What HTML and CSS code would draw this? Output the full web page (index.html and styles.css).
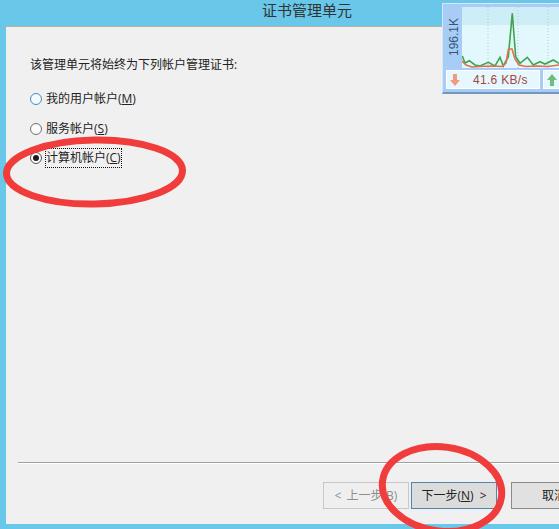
FILE: index.html
```html
<!DOCTYPE html>
<html lang="zh-CN">
<head>
<meta charset="utf-8">
<title>证书管理单元</title>
<link rel="stylesheet" href="styles.css">
</head>
<body>
<div class="window">
  <header class="titlebar">证书管理单元</header>
  <main class="panel">
    <section class="body">
      <p class="intro">该管理单元将始终为下列帐户管理证书:</p>
      <div class="options">
        <div class="option"><span class="radio radio-hover"></span><span class="label">我的用户帐户(<u>M</u>)</span></div>
        <div class="option"><span class="radio"></span><span class="label">服务帐户(<u>S</u>)</span></div>
        <div class="option option-last"><span class="radio radio-on"></span><span class="label label-focus">计算机帐户(<u>C</u>)</span></div>
      </div>
    </section>
    <footer class="footer">
      <div class="rule"></div>
      <div class="buttons">
        <span class="btn btn-disabled">&lt; 上一步(B)</span>
        <span class="btn btn-default">下一步(<u>N</u>) &gt;</span>
        <span class="btn btn-cancel">取消</span>
      </div>
    </footer>
  </main>
</div>

<aside class="meter">
  <div class="meter-top">
    <div class="meter-scale"><span>196.1K</span></div>
    <svg class="graph" width="97" height="61" viewBox="0 0 97 61">
      <rect width="97" height="18" fill="#cdeef6"/>
      <rect y="18" width="97" height="43" fill="#e2f8fd"/>
      <path class="grid" d="M26 0V61M56 0V61M86 0V61"/>
      <polyline class="line-green" points="0.3,49 3,56 7.3,53.7 13,58 18,59 26.3,55.3 33,59 38,50.3 41.3,59 46.3,49.7 50.3,6.3 53.7,49.7 58,56.3 65.3,50.3 71.3,58 78,54.7 83,57 91.3,53 97,56.3"/>
      <polyline class="line-orange" points="0,54 4,58 10,60 18,59.5 30,59 40,59.5 44,56 46.5,42 50,42 53,52 57,58 64,59.5 75,59 85,59.5 97,58"/>
    </svg>
  </div>
  <div class="meter-bottom">
    <div class="readout">
      <svg width="12" height="14" viewBox="0 0 12 14"><path fill="#f29a80" d="M4 1h4v6h3l-5 6-5-6h3z"/></svg>
      <span class="rate">41.6 KB/s</span>
    </div>
    <div class="readout readout-up">
      <svg width="12" height="14" viewBox="0 0 12 14"><path fill="#6fbf78" d="M6 1l5 6H8v6H4V7H1z"/></svg>
    </div>
  </div>
</aside>

<svg class="marks" width="559" height="529" viewBox="0 0 559 529">
  <ellipse cx="94.5" cy="172" rx="88" ry="32" transform="rotate(-1 94.5 172)"/>
  <ellipse cx="442" cy="489" rx="60" ry="42" transform="rotate(8 442 489)"/>
</svg>
</body>
</html>
```
FILE: styles.css
```css
* { box-sizing: border-box; }
html, body { margin: 0; height: 100%; }
body {
  width: 559px;
  height: 529px;
  overflow: hidden;
  background: #69c8ea;
  font-family: "Open Sans", "Noto Sans CJK SC", sans-serif;
  font-size: 12px;
  color: #222;
}
.window {
  height: 529px;
  display: flex;
  flex-direction: column;
  padding: 0 0 5px 6px;
}
.titlebar {
  height: 26px;
  margin-left: -6px;
  padding-left: 262px;
  font-size: 15px;
  line-height: 21px;
  color: #333;
  flex: none;
}
.panel {
  flex: 1;
  background: #f0f0f0;
  border-top: 1px solid #b9b2a8;
  display: flex;
  flex-direction: column;
}
.body { flex: 1; padding: 29px 0 0 24px; }
.intro { margin: 0; line-height: 18px; height: 18px; }
.options {
  margin-top: 16px;
  display: flex;
  flex-direction: column;
  gap: 12px;
}
.option {
  display: flex;
  align-items: center;
  gap: 4px;
  height: 18px;
}
.option-last { margin-top: -1px; }
.radio {
  width: 12px;
  height: 12px;
  border-radius: 50%;
  border: 1px solid #707070;
  background: #fbfbfb;
  flex: none;
  display: flex;
  align-items: center;
  justify-content: center;
}
.radio-hover { border-color: #3c8fc4; background: #f4fafd; }
.radio-on { border-color: #555; }
.radio-on::after {
  content: "";
  width: 6px;
  height: 6px;
  border-radius: 50%;
  background: #1c1c1c;
}
.label { line-height: 18px; }
.label-focus { outline: 1px dotted #111; outline-offset: 0; }
.footer { flex: none; padding-left: 12px; }
.rule {
  border-top: 1px solid #a0a0a0;
  border-bottom: 1px solid #fff;
  height: 2px;
}
.buttons {
  display: flex;
  padding: 18px 0 15px 305px;
  width: 600px;
}
.btn {
  width: 86px;
  height: 27px;
  line-height: 25px;
  text-align: center;
  border: 1px solid #adadad;
  background: #e1e1e1;
  flex: none;
}
.btn-disabled {
  border-color: #c8c8c8;
  background: #efefef;
  color: #8e8e8e;
  word-spacing: 2px;
}
.btn-default {
  margin-left: 2px;
  border-color: #4d87ae;
  background: #dcdcdc;
  word-spacing: 3px;
}
.btn-cancel {
  margin-left: 14px;
  border-color: #8a8a8a;
}
.meter {
  position: absolute;
  left: 442px;
  top: 3px;
  width: 117px;
  height: 91px;
  background: #a7cdf6;
  border-top: 1px solid #d5e8f8;
  border-left: 1px solid #d5e8f8;
  border-bottom: 2px solid #7398bd;
  padding: 3px 0 0 3px;
  display: flex;
  flex-direction: column;
  gap: 2px;
}
.meter-top { display: flex; height: 61px; }
.meter-scale {
  width: 16px;
  display: flex;
  align-items: center;
  justify-content: center;
}
.meter-scale span {
  display: block;
  writing-mode: vertical-rl;
  transform: rotate(180deg);
  font-family: "Liberation Sans", sans-serif;
  font-size: 12px;
  color: #34557c;
  white-space: nowrap;
}
.graph { display: block; flex: none; }
.grid { fill: none; stroke: #b4c8cc; stroke-dasharray: 1 2; }
.line-green { fill: none; stroke: #3fa34d; stroke-width: 1.6; }
.line-orange { fill: none; stroke: #e0704a; stroke-width: 1.6; }
.meter-bottom { display: flex; gap: 3px; }
.readout {
  width: 94px;
  height: 19px;
  background: #e6f7fd;
  border: 1px solid #fff;
  display: flex;
  align-items: center;
  padding-left: 2px;
  flex: none;
}
.readout-up { width: 30px; }
.rate {
  font-family: "Liberation Sans", sans-serif;
  font-size: 12px;
  color: #a3483c;
  margin-left: 12px;
  letter-spacing: 0.3px;
}
.marks {
  position: absolute;
  left: 0;
  top: 0;
  pointer-events: none;
}
.marks ellipse { fill: none; stroke: #f13c3c; stroke-width: 7; }
```
